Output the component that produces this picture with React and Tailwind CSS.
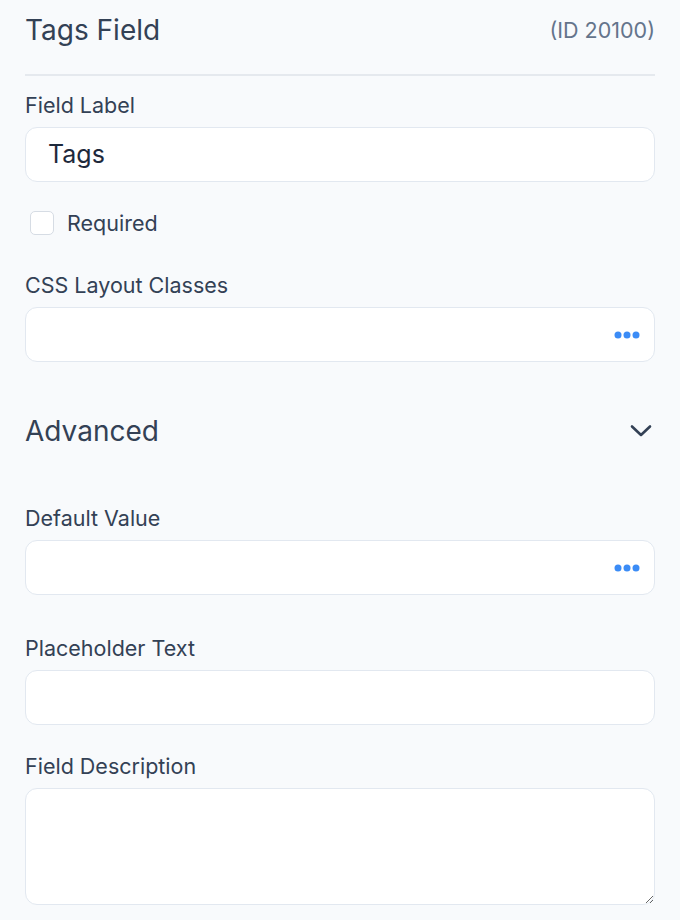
function Dots() {
  return (
    <svg width="26" height="8" viewBox="0 0 26 8" className="shrink-0">
      <circle cx="4" cy="4" r="3.5" fill="#3b8cf6" />
      <circle cx="13" cy="4" r="3.5" fill="#3b8cf6" />
      <circle cx="22" cy="4" r="3.5" fill="#3b8cf6" />
    </svg>
  );
}

function Chevron() {
  return (
    <svg width="22" height="14" viewBox="0 0 22 14" fill="none" className="mr-[3px]">
      <polyline
        points="2,2.5 11,11 20,2.5"
        stroke="#334155"
        strokeWidth="2.6"
        strokeLinecap="round"
        strokeLinejoin="round"
      />
    </svg>
  );
}

function Label({ children, className = "" }) {
  return (
    <label className={`block text-[21.5px] leading-[28px] text-[#334155] ${className}`}>
      {children}
    </label>
  );
}

function TextBox({ value, dots }) {
  return (
    <div className="h-[55px] w-full rounded-[12px] border border-[#e2e8f0] bg-white flex items-center pl-[22px] pr-[14px]">
      <span className="flex-1 text-[25px] text-[#1e293b]">{value}</span>
      {dots && <Dots />}
    </div>
  );
}

export default function App() {
  return (
    <div
      className="min-h-screen bg-[#f8fafc] px-[25px] text-[#334155]"
      style={{ fontFamily: "Inter, 'Noto Sans', sans-serif" }}
    >
      {/* header */}
      <div className="flex items-center justify-between pt-[12px] pb-[26px] border-b-2 border-[#e5e9ee]">
        <h1 className="text-[28px] leading-[36px] text-[#334155]">Tags Field</h1>
        <span className="text-[21.5px] text-[#64748b]">(ID 20100)</span>
      </div>

      <Label className="mt-[15px] mb-[8px]">Field Label</Label>
      <TextBox value="Tags" />

      <div className="flex items-center gap-[13px] mt-[26px] pl-[5px]">
        <div className="w-[24px] h-[24px] rounded-[5px] border border-[#d6dce4] bg-white" />
        <span className="text-[21.5px] leading-[30px] text-[#334155]">Required</span>
      </div>

      <Label className="mt-[33px] mb-[8px]">CSS Layout Classes</Label>
      <TextBox dots />

      <div className="flex items-center justify-between mt-[51px]">
        <h2 className="text-[28px] leading-[36px] text-[#334155]">Advanced</h2>
        <Chevron />
      </div>

      <Label className="mt-[55px] mb-[8px]">Default Value</Label>
      <TextBox dots />

      <Label className="mt-[39px] mb-[8px]">Placeholder Text</Label>
      <TextBox />

      <Label className="mt-[27px] mb-[8px]">Field Description</Label>
      <textarea className="block w-full h-[117px] rounded-[12px] border border-[#e2e8f0] bg-white outline-none" />
    </div>
  );
}
